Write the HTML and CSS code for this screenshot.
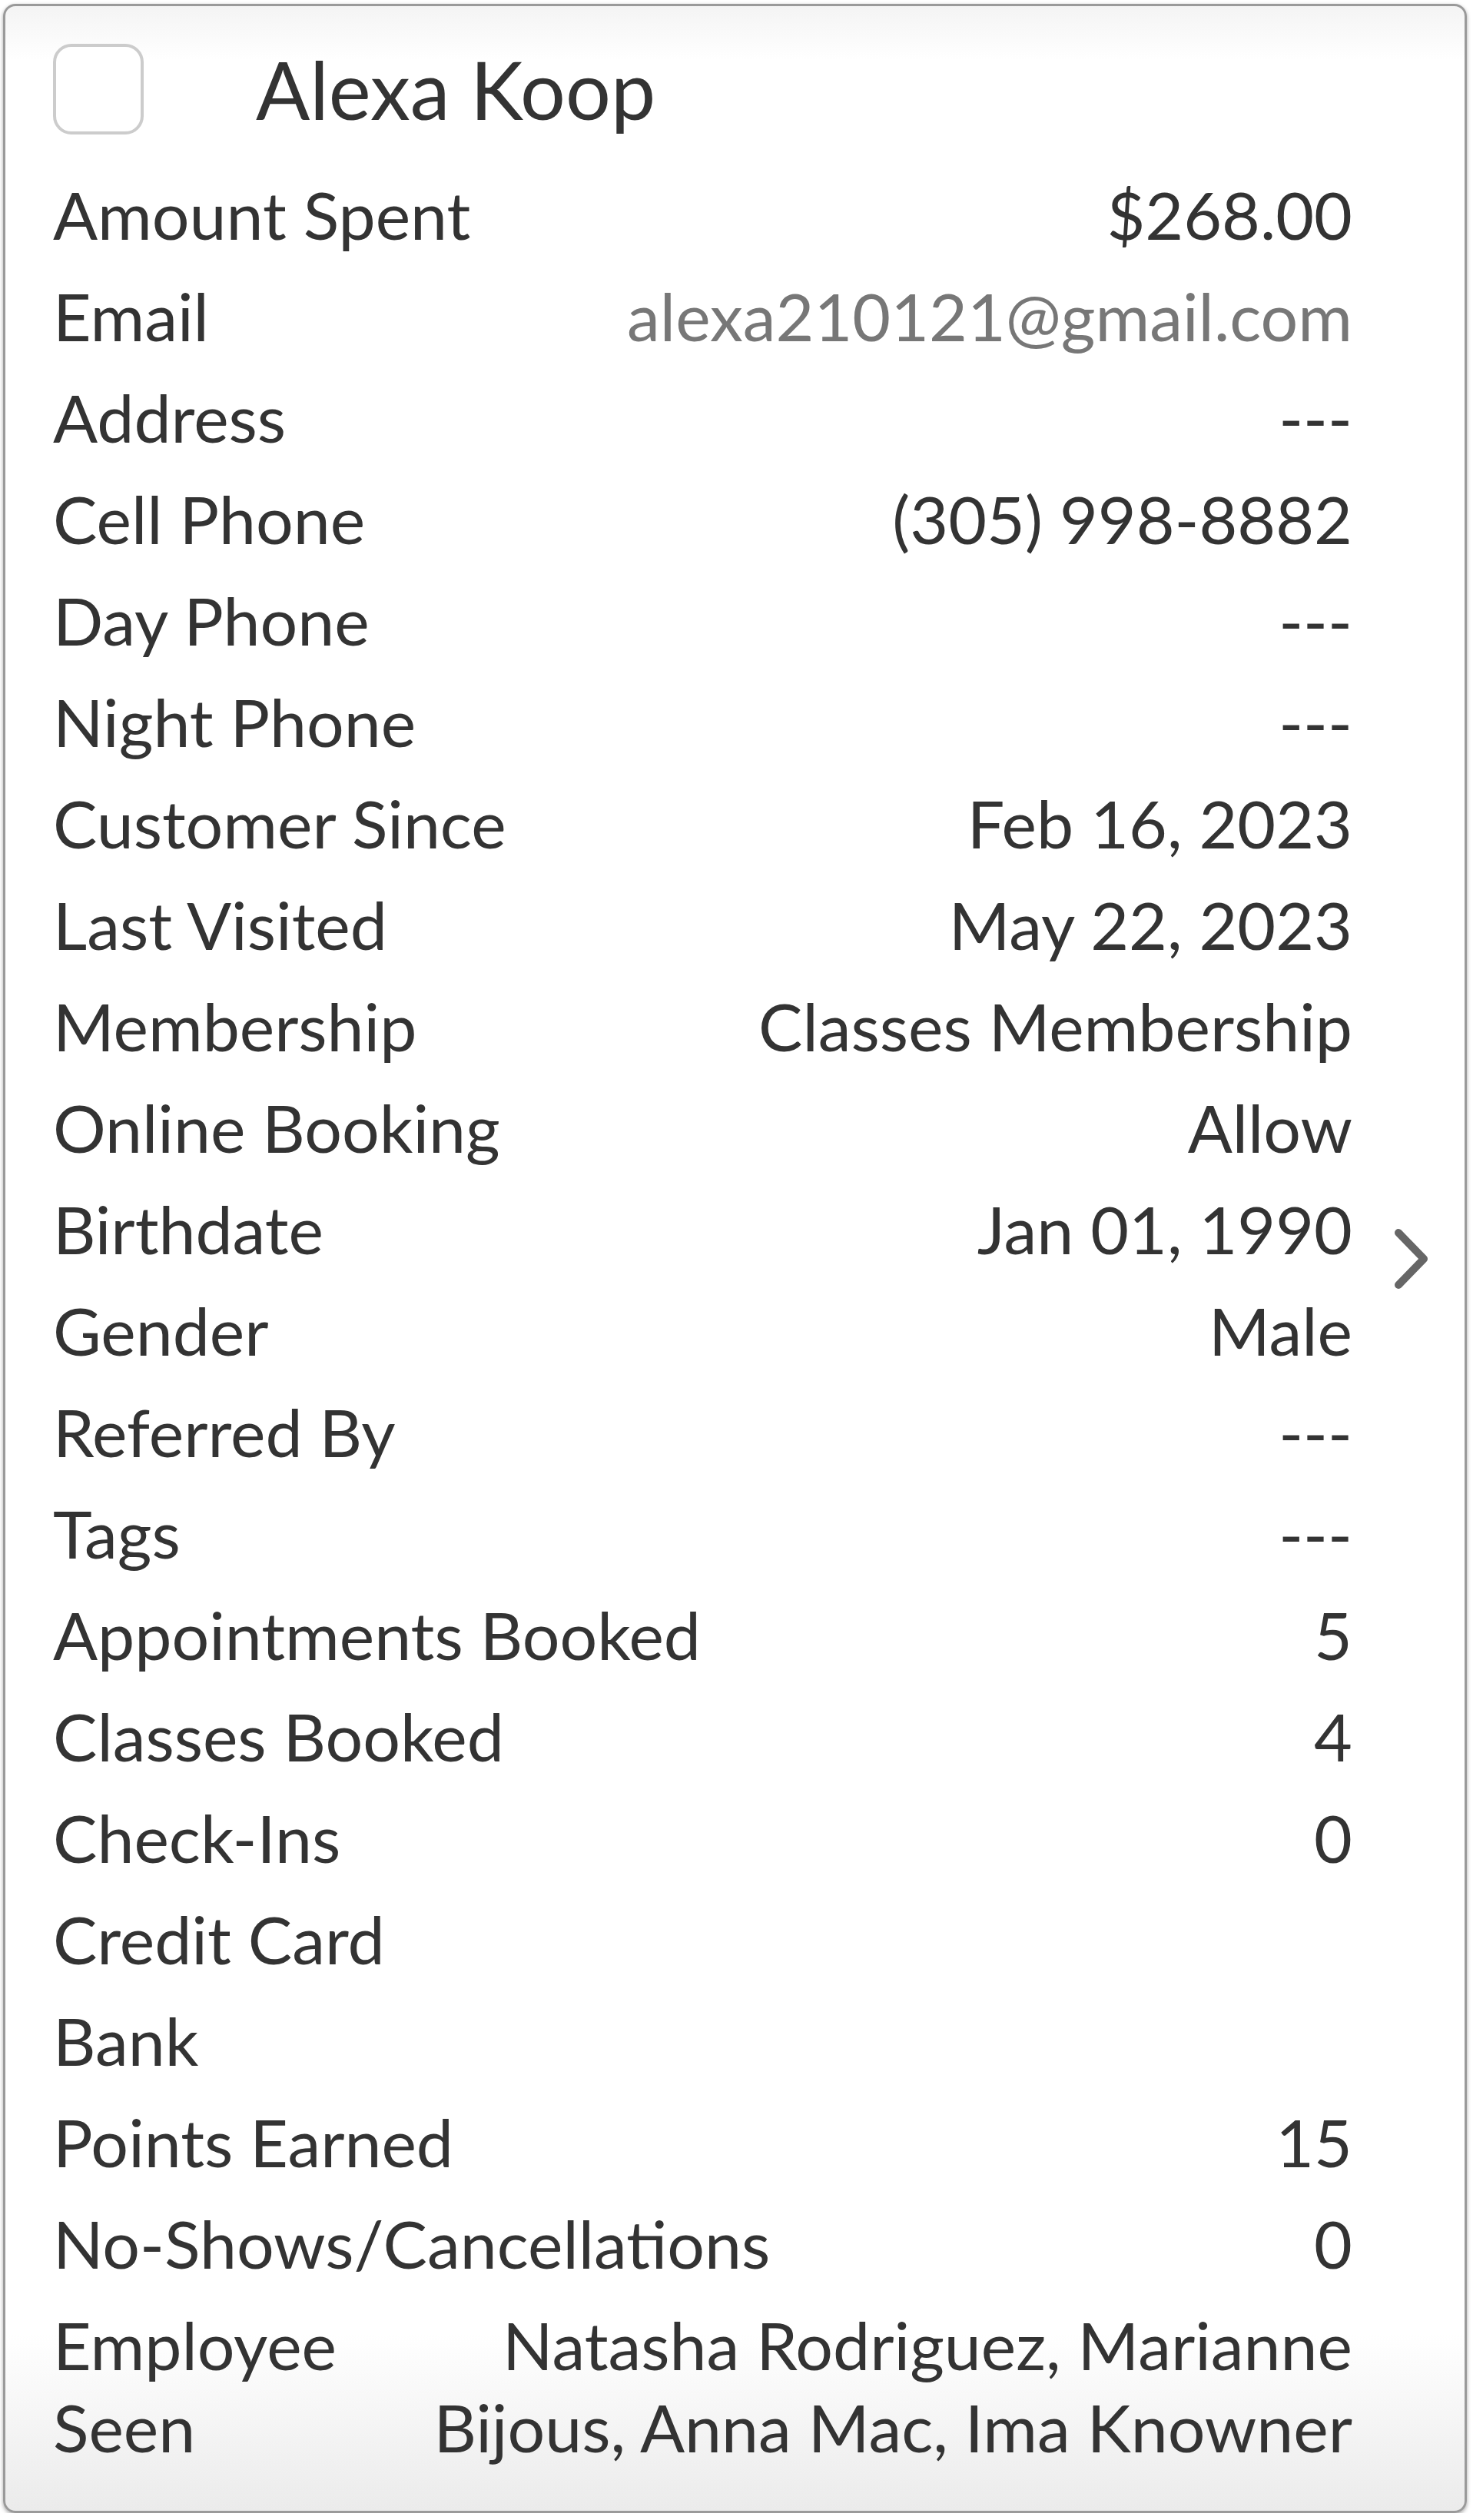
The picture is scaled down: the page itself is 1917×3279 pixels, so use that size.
FILE: index.html
```html
<!DOCTYPE html>
<html lang="en">
<head>
    <meta charset="UTF-8">
    <meta name="viewport" content="width=device-width, initial-scale=1.0">
    <title>Client Details</title>
    <link rel="stylesheet" href="styles.css">
</head>
<body>
    <div class="client-card">
        <div class="client-header">
            <div class="checkbox"></div>
            <h2 class="client-name">Alexa Koop</h2>
        </div>

        <div class="detail-row">
            <span class="label">Amount Spent</span>
            <span class="value">$268.00</span>
        </div>
        <div class="detail-row">
            <span class="label">Email</span>
            <span class="value muted">alexa210121@gmail.com</span>
        </div>
        <div class="detail-row">
            <span class="label">Address</span>
            <span class="value">---</span>
        </div>
        <div class="detail-row">
            <span class="label">Cell Phone</span>
            <span class="value">(305) 998-8882</span>
        </div>
        <div class="detail-row">
            <span class="label">Day Phone</span>
            <span class="value">---</span>
        </div>
        <div class="detail-row">
            <span class="label">Night Phone</span>
            <span class="value">---</span>
        </div>
        <div class="detail-row">
            <span class="label">Customer Since</span>
            <span class="value">Feb 16, 2023</span>
        </div>
        <div class="detail-row">
            <span class="label">Last Visited</span>
            <span class="value">May 22, 2023</span>
        </div>
        <div class="detail-row">
            <span class="label">Membership</span>
            <span class="value">Classes Membership</span>
        </div>
        <div class="detail-row">
            <span class="label">Online Booking</span>
            <span class="value">Allow</span>
        </div>
        <div class="detail-row">
            <span class="label">Birthdate</span>
            <span class="value">Jan 01, 1990</span>
        </div>
        <div class="detail-row">
            <span class="label">Gender</span>
            <span class="value">Male</span>
        </div>
        <div class="detail-row">
            <span class="label">Referred By</span>
            <span class="value">---</span>
        </div>
        <div class="detail-row">
            <span class="label">Tags</span>
            <span class="value">---</span>
        </div>
        <div class="detail-row">
            <span class="label">Appointments Booked</span>
            <span class="value">5</span>
        </div>
        <div class="detail-row">
            <span class="label">Classes Booked</span>
            <span class="value">4</span>
        </div>
        <div class="detail-row">
            <span class="label">Check-Ins</span>
            <span class="value">0</span>
        </div>
        <div class="detail-row">
            <span class="label">Credit Card</span>
            <span class="value"></span>
        </div>
        <div class="detail-row">
            <span class="label">Bank</span>
            <span class="value"></span>
        </div>
        <div class="detail-row">
            <span class="label">Points Earned</span>
            <span class="value">15</span>
        </div>
        <div class="detail-row">
            <span class="label">No-Shows/Cancellations</span>
            <span class="value">0</span>
        </div>
        <div class="detail-row multi">
            <span class="label">Employee Seen</span>
            <span class="value">Natasha Rodriguez, Marianne Bijous, Anna Mac, Ima Knowner</span>
        </div>

        <svg class="chevron" width="46" height="80" viewBox="0 0 46 80">
            <polyline points="6,6 39,40 6,74" fill="none" stroke="#666" stroke-width="10" stroke-linecap="round" stroke-linejoin="round"/>
        </svg>
    </div>
</body>
</html>
```

FILE: styles.css
```css
body {
    margin: 0;
    background-color: #fff;
    font-family: 'Lato', 'Liberation Sans', sans-serif;
    color: #333;
}

.client-card {
    position: relative;
    margin: 5px 8px 0 4px;
    height: 3265px;
    box-sizing: border-box;
    border: 3px solid #9a9a9a;
    border-radius: 16px;
    box-shadow: 0 2px 5px rgba(0,0,0,0.35);
    background: linear-gradient(to bottom, #f4f4f4 0, #fff 70px, #fff calc(100% - 230px), #ebebeb 100%);
    padding: 49px 146px 0 62px;
}

.client-header {
    display: flex;
    align-items: center;
    margin-bottom: 37px;
}

.checkbox {
    width: 118px;
    height: 118px;
    box-sizing: border-box;
    border: 4px solid #ccc;
    border-radius: 24px;
    background-color: #fff;
    flex: none;
}

.client-name {
    margin: 0 0 0 146px;
    font-size: 104px;
    font-weight: 400;
    line-height: 118px;
}

.detail-row {
    display: flex;
    justify-content: space-between;
    align-items: flex-start;
    font-size: 86px;
    line-height: 107px;
    padding: 12.5px 0;
}

.label {
    white-space: nowrap;
}

.value {
    text-align: right;
    white-space: nowrap;
}

.value.muted {
    color: #777;
}

.detail-row.multi .label {
    white-space: normal;
    flex: 1;
}

.detail-row.multi .value {
    white-space: normal;
    max-width: 1260px;
}

.chevron {
    position: absolute;
    right: 46px;
    top: 50%;
    transform: translateY(-50%);
}
```
